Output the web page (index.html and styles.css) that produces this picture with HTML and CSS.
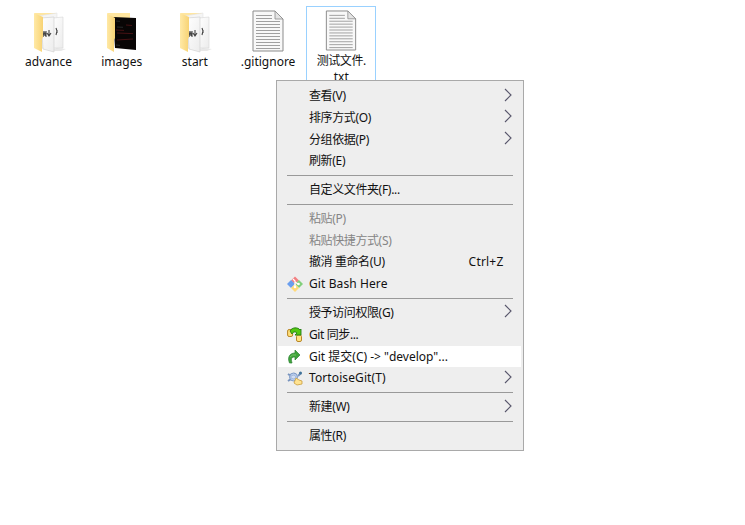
FILE: index.html
```html
<!DOCTYPE html>
<html lang="zh-CN">
<head>
<meta charset="utf-8">
<title>文件</title>
<link rel="stylesheet" href="styles.css">
</head>
<body>
<svg width="0" height="0" class="defs">
  <defs>
    <linearGradient id="fold" x1="0" x2="1"><stop offset="0" stop-color="#ffe9a6"/><stop offset="1" stop-color="#f8d374"/></linearGradient>
    <linearGradient id="page" x1="0" x2="1" y2="1"><stop offset="0" stop-color="#fff"/><stop offset="1" stop-color="#ececec"/></linearGradient>
    <symbol id="papers" viewBox="0 0 40 44">
      <path d="M28 39l9 1-5 2H20z" fill="#e8e8e8"/>
      <path d="M5 4h22v5H12z" fill="#ffe6a0"/>
      <path d="M9 7l19-3v35H13z" fill="#f5f5f5" stroke="#e2e2e2" stroke-width=".6"/>
      <path d="M24 9l10-1v31H24z" fill="url(#page)" stroke="#d6d6d6" stroke-width=".6"/>
      <path d="M12 9l13-1v35l-11-3z" fill="url(#page)" stroke="#d2d2d2" stroke-width=".7"/>
      <path d="M14 28l1-6 1 5 1-5v6M20 21v6m-2-3l2 3 2-3M27 19l1 3-1 4M28 21v3" fill="none" stroke="#444" stroke-width="1.1"/>
      <path d="M5 4l9 4v20l-1 2v13l-8-4z" fill="url(#fold)"/>
    </symbol>
    <symbol id="document" viewBox="0 0 32 42">
      <path d="M1 1h22l8 8v32H1z" fill="#f8f8f8" stroke="#8b8b8b"/>
      <path d="M23 1v8h8z" fill="#e4e4e4" stroke="#8b8b8b" stroke-width=".8"/>
      <path d="M4 5.5h16M4 8.5h16M4 11.500h24M4 14.500h24M4 17.500h24M4 20.500h24M4 23.500h24M4 26.500h24M4 29.500h24M4 32.500h24M4 35.500h24M4 38.500h24" stroke="#a0a0a0" stroke-width="1"/>
    </symbol>
    <symbol id="chev" viewBox="0 0 8 14"><path d="M1 1l6 6-6 6" fill="none" stroke="#59576c" stroke-width="1.15"/></symbol>
  </defs>
</svg>
<main class="desktop">
  <div class="file"><svg class="folder"><use href="#papers"/></svg><span class="name advance">advance</span></div>
  <div class="file"><svg class="folder" viewBox="0 0 40 44">
    <path d="M5 4h23v5H12z" fill="#ffe6a0"/>
    <path d="M11 8l23 1v32l-21-2z" fill="#080505"/>
    <path d="M14 12l4 .3M15 18l6 .3M14 36l4 .4" stroke="#34393a" stroke-width=".7"/>
    <path d="M14 21l8 .4M15 24l16 .6M15 31l16-1M24 16l6 .5" stroke="#551416" stroke-width=".8"/>
    <path d="M5 4l8 5v20l-1 2v12l-7-4z" fill="url(#fold)"/>
  </svg><span class="name images">images</span></div>
  <div class="file"><svg class="folder"><use href="#papers"/></svg><span class="name start">start</span></div>
  <div class="file"><svg class="doc"><use href="#document"/></svg><span class="name ignore">.gitignore</span></div>
  <div class="file selected"><svg class="doc"><use href="#document"/></svg><span class="name"><span class="cjk">测试文件.</span><br>txt</span></div>
</main>
<nav class="menu">
  <div class="item"><i></i><span>查看<b>(V)</b></span><svg class="chev"><use href="#chev"/></svg></div>
  <div class="item"><i></i><span>排序方式<b>(O)</b></span><svg class="chev"><use href="#chev"/></svg></div>
  <div class="item"><i></i><span>分组依据<b>(P)</b></span><svg class="chev"><use href="#chev"/></svg></div>
  <div class="item"><i></i><span>刷新<b>(E)</b></span></div>
  <hr>
  <div class="item"><i></i><span>自定义文件夹<b>(F)...</b></span></div>
  <hr>
  <div class="item disabled"><i></i><span>粘贴<b>(P)</b></span></div>
  <div class="item disabled"><i></i><span>粘贴快捷方式<b>(S)</b></span></div>
  <div class="item"><i></i><span>撤消 重命名<b>(U)</b></span><kbd>Ctrl+Z</kbd></div>
  <div class="item"><i><svg viewBox="0 0 16 16">
    <path d="M8 .5l4 4-4 3.800-4-3.800z" fill="#f28082"/><path d="M4 4l4 4-4 4-4-4z" fill="#6a9eee"/><path d="M12 4l4 4-4 4-4-4z" fill="#82cf7b"/><path d="M8 8l4 4-4 4-4-4z" fill="#ffd978"/>
    <path d="M6 3l2 2v6M8 6l3 2" fill="none" stroke="#fff" stroke-width="1.200"/><circle cx="8" cy="11" r="1.300" fill="#fff"/><circle cx="11.500" cy="8" r="1.300" fill="#fff"/>
  </svg></i><span class="bash">Git Bash Here</span></div>
  <hr>
  <div class="item"><i></i><span>授予访问权限<b>(G)</b></span><svg class="chev"><use href="#chev"/></svg></div>
  <div class="item"><i><svg viewBox="0 0 16 16">
    <rect x=".6" y="2.500" width="5" height="7" rx="1.500" fill="#ffdf79" stroke="#b98525"/><rect x="9.500" y="8" width="5" height="6.500" rx="1.500" fill="#ffe382" stroke="#b98525"/>
    <path d="M3 4c2-4 8-4 10-1l1-1v6H8l2-2C8 4 6 5 5 7z" fill="#54c812" stroke="#237c14" stroke-width=".9"/>
  </svg></i><span class="sync">Git 同步...</span></div>
  <div class="item active"><i><svg viewBox="0 0 16 16"><path d="M2.500 14C0 8 3 4 8 4V1l5 5-5 5V8C4 8 4 10 5 14z" fill="#40a33b" stroke="#2b8133" stroke-width=".7"/><path d="M3 8q2-3 6-2" fill="none" stroke="#72c564"/></svg></i><span class="commit">Git 提交(C) -&gt; "develop"...</span></div>
  <div class="item"><i><svg viewBox="0 0 16 16">
    <path d="M1 4l3 2M1 11l3-2M8 3l-1 3M11 6l3-3" stroke="#7894bd" stroke-width="2"/><circle cx="6.500" cy="7" r="4" fill="#b9cceb" stroke="#809cc8"/><path d="M4 6l3-1 2 2-2 2-3-1z" fill="#d2def2" stroke="#91aad2" stroke-width=".6"/><circle cx="13.500" cy="3" r="1.500" fill="#407399"/>
    <path d="M9 8l3 2 3 1v3l-5 1-3-2z" fill="#ffe391" stroke="#c99d3c" stroke-width=".8"/>
  </svg></i><span class="tortoise">TortoiseGit(T)</span><svg class="chev"><use href="#chev"/></svg></div>
  <hr>
  <div class="item"><i></i><span>新建<b>(W)</b></span><svg class="chev"><use href="#chev"/></svg></div>
  <hr>
  <div class="item"><i></i><span>属性<b>(R)</b></span></div>
</nav>
</body>
</html>
```
FILE: styles.css
```css
* { box-sizing: border-box; }
body { margin: 0; width: 745px; height: 525px; overflow: hidden; background: #fff; color: #111; font: 12px/16px "Noto Sans", "Noto Sans CJK SC", sans-serif; }
.defs { position: absolute; }
.desktop { display: flex; gap: 3.2px; padding: 6px 0 0 13.500px; }
.file { display: flex; flex-direction: column; align-items: center; width: 70px; height: 80px; border: 1px solid transparent; padding-top: 2px; }
.selected { border-color: #99d1ff; }
.folder { width: 40px; height: 44px; }
.doc { width: 32px; height: 42px; margin: 1px 0; }
.name { text-align: center; white-space: nowrap; margin-top: 1px; }
.cjk { letter-spacing: -.4px; }
.menu { position: absolute; left: 275.500px; top: 80px; width: 248px; height: 371px; background: #eee; border: 1px solid #a9a9a9; border-width: 1px 1.500px 1.500px 1px; padding: 4.200px 1.500px; }
.item { display: flex; align-items: center; height: 21.800px; padding: 0 9px 0 8.500px; letter-spacing: -.4px; white-space: nowrap; }
.item i { width: 16px; height: 16px; margin-right: 6.500px; }
.item i svg { display: block; width: 16px; height: 16px; }
.item b { font-weight: 400; letter-spacing: -.3px; }
.item .chev { width: 8px; height: 14px; margin: -3px 0 0 auto; }
.item kbd { margin-left: auto; margin-right: 8.500px; font: inherit; letter-spacing: .2px; }
.disabled { color: #858585; }
.active { background: #fff; }
hr { height: 1px; margin: 3px 8.500px 2.900px; border: 0; background: #999; }
.item .bash, .item .tortoise { letter-spacing: .1px; }
.item .commit { letter-spacing: 0; }
```
